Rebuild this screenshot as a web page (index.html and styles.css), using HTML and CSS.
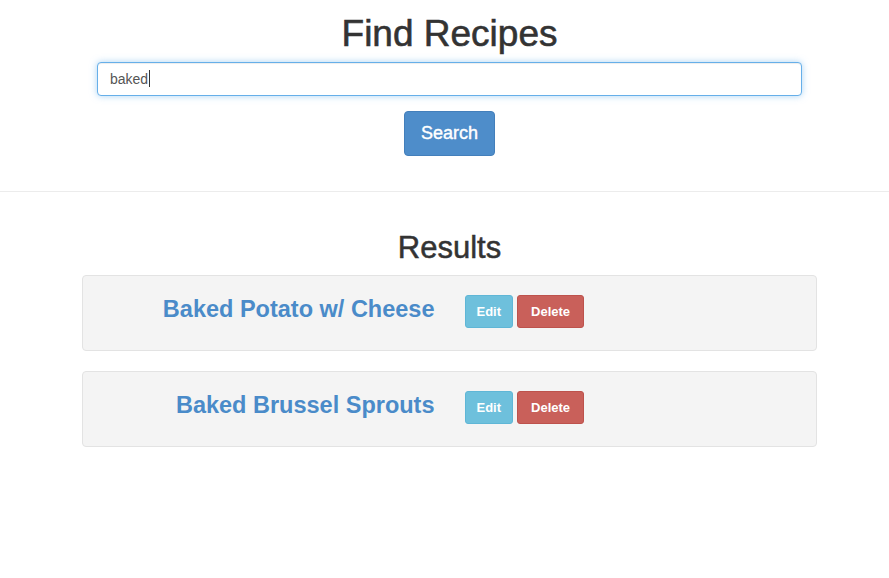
FILE: index.html
```html
<!DOCTYPE html>
<html lang="en">
<head>
<meta charset="utf-8">
<title>Find Recipes</title>
<link rel="stylesheet" href="styles.css">
</head>
<body>
<div class="page">
  <section class="search container">
    <h1 class="title">Find Recipes</h1>
    <div class="field">
      <input class="form-control is-focused" type="text" value="baked">
      <span class="caret"></span>
    </div>
    <button class="btn btn-primary btn-lg" type="button">Search</button>
  </section>
</div>
<hr class="divider">
<div class="page">
  <section class="results container">
    <h2 class="subtitle">Results</h2>
    <div class="well">
      <div class="row">
        <div class="col col-name"><h3 class="recipe"><a href="#">Baked Potato w/ Cheese</a></h3></div>
        <div class="col col-actions"><button class="btn btn-sm btn-info" type="button">Edit</button><button class="btn btn-sm btn-danger" type="button">Delete</button></div>
      </div>
    </div>
    <div class="well">
      <div class="row">
        <div class="col col-name"><h3 class="recipe"><a href="#">Baked Brussel Sprouts</a></h3></div>
        <div class="col col-actions"><button class="btn btn-sm btn-info" type="button">Edit</button><button class="btn btn-sm btn-danger" type="button">Delete</button></div>
      </div>
    </div>
  </section>
</div>
</body>
</html>
```
FILE: styles.css
```css
* { box-sizing: border-box; }
html, body { margin: 0; padding: 0; background: #fff; }
body {
  font-family: "Liberation Sans", Arial, Helvetica, sans-serif;
  font-size: 14px;
  color: #333;
}
.page { padding-left: 10px; }
.container { width: 735px; margin: 0 auto; }

.search { text-align: center; }
.title {
  margin: 13px 0 8px;
  font-size: 37px;
  line-height: 41px;
  font-weight: normal;
  color: #333;
  -webkit-text-stroke: 0.6px #333;
}
.field { position: relative; margin: 0 15px; }
.form-control {
  display: block;
  width: 100%;
  height: 34px;
  padding: 6px 12px;
  font-family: inherit;
  font-size: 14px;
  line-height: 20px;
  color: #555;
  background: #fff;
  border: 1px solid #ccc;
  border-radius: 4px;
  outline: none;
}
.form-control.is-focused {
  border-color: #66afe9;
  box-shadow: inset 0 1px 1px rgba(0,0,0,.075), 0 0 7px rgba(102,175,233,.55);
}
.caret {
  position: absolute;
  left: 52px;
  top: 8px;
  width: 1px;
  height: 17px;
  background: #333;
}
.btn {
  display: inline-block;
  font-family: inherit;
  border: 1px solid transparent;
  color: #fff;
  cursor: pointer;
  text-align: center;
  vertical-align: middle;
}
.btn-lg {
  margin-top: 15px;
  padding: 10px 16px;
  font-size: 18px;
  line-height: 23px;
  border-radius: 4px;
  -webkit-text-stroke: 0.4px #fff;
}
.btn-primary { background: #4e8dca; border-color: #437fbb; }

.divider {
  margin: 35px 0 0;
  border: 0;
  border-top: 1px solid #ececec;
  height: 0;
}

.results { padding-top: 39px; }
.subtitle {
  margin: 0 0 10px;
  text-align: center;
  font-size: 31px;
  line-height: 34px;
  font-weight: normal;
  color: #333;
  -webkit-text-stroke: 0.5px #333;
}
.well {
  background: #f4f4f4;
  border: 1px solid #e3e3e3;
  border-radius: 4px;
  padding: 19px;
  margin-bottom: 20px;
}
.row {
  display: grid;
  grid-template-columns: 1fr 1fr;
  margin: 0 -15px;
  height: 36px;
  align-items: start;
}
.col { padding: 0 15px; }
.col-name { text-align: right; }
.col-actions { display: flex; gap: 4px; }
.recipe {
  margin: 0;
  padding-top: 1px;
  font-size: 23.5px;
  line-height: 26.4px;
  font-weight: bold;
}
.recipe a { color: #4a8bc9; text-decoration: none; }
.btn-sm {
  height: 33px;
  padding: 0 11px;
  font-size: 13px;
  font-weight: bold;
  line-height: 31px;
  border-radius: 3px;
}
.btn-info { background: #6ec0dc; border-color: #5fb6d6; }
.btn-danger { background: #c9605a; border-color: #bd524c; padding: 0 13px; }
```
